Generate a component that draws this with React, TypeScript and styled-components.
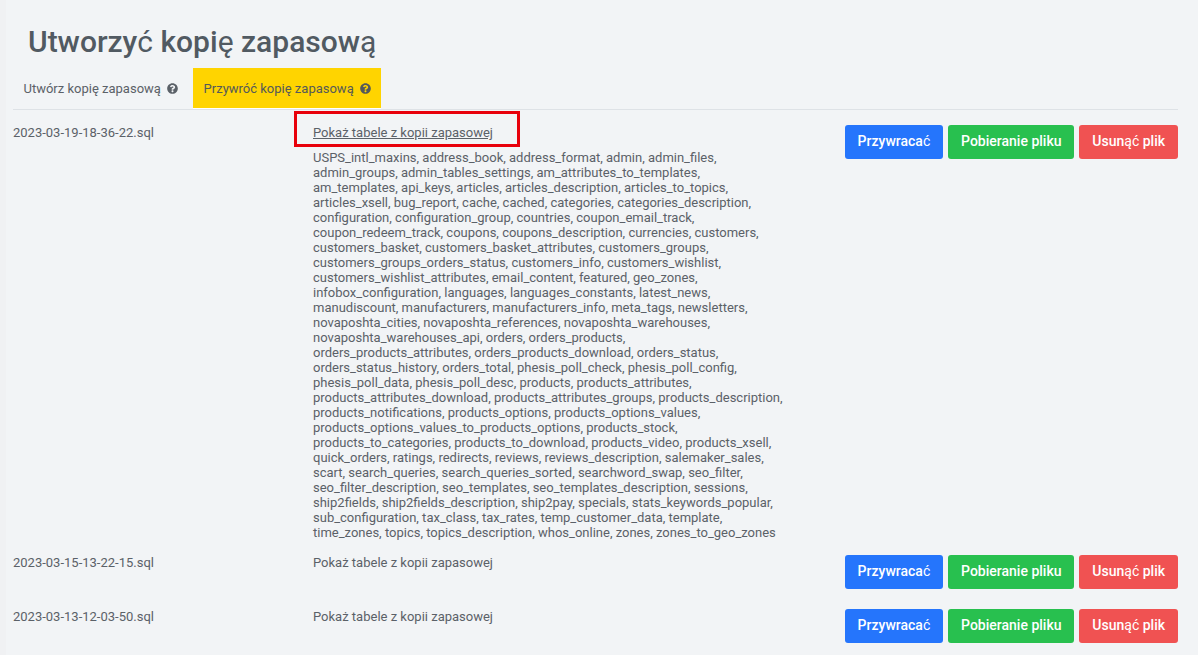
import React from "react";
import styled, { createGlobalStyle } from "styled-components";

const Global = createGlobalStyle`
  html, body { margin: 0; padding: 0; background: #f2f4f6; }
  body { font-family: Roboto, "Liberation Sans", sans-serif; color: #5b6168; font-size: 13px; line-height: 15px; }
  * { box-sizing: border-box; }
`;

const Page = styled.div`
  position: relative;
  width: 1198px;
  height: 655px;
  overflow: hidden;
  border-left: 6px solid #f0f1f3;
  padding: 0 20px 0 7px;
`;

const Title = styled.h1`
  margin: 0;
  padding: 24px 0 0 15px;
  height: 68px;
  font-size: 30px;
  line-height: 35px;
  font-weight: 500;
  color: #515a62;
`;

const LightGlyph = styled.span`
  font-weight: 400;
`;

const Tabs = styled.div`
  display: flex;
  gap: 4.7px;
  height: 42px;
  border-bottom: 1px solid #dee2e6;
`;

const Tab = styled.div<{ $active?: boolean }>`
  display: flex;
  align-items: center;
  gap: 6px;
  height: 41px;
  padding: 0 10.5px;
  background: ${(p) => (p.$active ? "#ffd400" : "transparent")};
  color: ${(p) => (p.$active ? "#54595a" : "#5b6168")};
  border-bottom: ${(p) => (p.$active ? "1px solid #fff" : "none")};
`;

const Help = () => (
  <svg width="11" height="11" viewBox="0 0 512 512" fill="currentColor" aria-hidden="true">
    <path d="M504 256c0 137-111 248-248 248S8 393 8 256C8 119 119 8 256 8s248 111 248 248zM262.700 90c-54.500 0-89.300 23-116.600 63.800-3.500 5.300-2.400 12.400 2.700 16.300l34.700 26.300c5.200 3.900 12.600 3 16.700-2.100 17.900-22.700 30.100-35.800 57.300-35.800 20.400 0 45.700 13.100 45.700 32.900 0 15-12.400 22.700-32.500 34-23.500 13.200-54.600 29.600-54.600 70.500V302c0 6.600 5.400 12 12 12h56c6.600 0 12-5.400 12-12v-1.300c0-28.400 82.900-29.600 82.900-106.400C380 136.400 319.900 90 262.700 90zM256 338c-25.400 0-46 20.600-46 46 0 25.400 20.600 46 46 46s46-20.600 46-46c0-25.400-20.600-46-46-46z" />
  </svg>
);

const Row = styled.div`
  display: grid;
  grid-template-columns: 300px 471px 1fr;
  padding-top: 15px;
`;

const FileName = styled.div``;

const Details = styled.div``;

const ToggleLink = styled.a<{ $open?: boolean }>`
  display: block;
  color: #5b6168;
  text-decoration: ${(p) => (p.$open ? "underline" : "none")};
`;

const TableList = styled.div`
  margin-top: 10px;
`;

const Actions = styled.div`
  display: flex;
  justify-content: flex-end;
  gap: 5px;
  margin-bottom: 5px;
`;

const ActionButton = styled.button<{ $color: string }>`
  height: 34px;
  padding: 0 12.95px 2px;
  border: none;
  border-radius: 3px;
  background: ${(p) => p.$color};
  color: #fff;
  font-family: inherit;
  font-size: 14px;
  font-weight: 500;
  white-space: nowrap;
`;

const Highlight = styled.div`
  position: absolute;
  left: 288px;
  top: 111px;
  width: 226px;
  height: 36px;
  border: 3px solid #e8000b;
  pointer-events: none;
`;

const tables =
  "USPS_intl_maxins, address_book, address_format, admin, admin_files, admin_groups, admin_tables_settings, am_attributes_to_templates, am_templates, api_keys, articles, articles_description, articles_to_topics, articles_xsell, bug_report, cache, cached, categories, categories_description, configuration, configuration_group, countries, coupon_email_track, coupon_redeem_track, coupons, coupons_description, currencies, customers, customers_basket, customers_basket_attributes, customers_groups, customers_groups_orders_status, customers_info, customers_wishlist, customers_wishlist_attributes, email_content, featured, geo_zones, infobox_configuration, languages, languages_constants, latest_news, manudiscount, manufacturers, manufacturers_info, meta_tags, newsletters, novaposhta_cities, novaposhta_references, novaposhta_warehouses, novaposhta_warehouses_api, orders, orders_products, orders_products_attributes, orders_products_download, orders_status, orders_status_history, orders_total, phesis_poll_check, phesis_poll_config, phesis_poll_data, phesis_poll_desc, products, products_attributes, products_attributes_download, products_attributes_groups, products_description, products_notifications, products_options, products_options_values, products_options_values_to_products_options, products_stock, products_to_categories, products_to_download, products_video, products_xsell, quick_orders, ratings, redirects, reviews, reviews_description, salemaker_sales, scart, search_queries, search_queries_sorted, searchword_swap, seo_filter, seo_filter_description, seo_templates, seo_templates_description, sessions, ship2fields, ship2fields_description, ship2pay, specials, stats_keywords_popular, sub_configuration, tax_class, tax_rates, temp_customer_data, template, time_zones, topics, topics_description, whos_online, zones, zones_to_geo_zones";

const backups = [
  { name: "2023-03-19-18-36-22.sql", open: true },
  { name: "2023-03-15-13-22-15.sql", open: false },
  { name: "2023-03-13-12-03-50.sql", open: false },
];

export default function App() {
  return (
    <Page>
      <Global />
      <Title>
        Utworzy<LightGlyph>ć</LightGlyph> kopi<LightGlyph>ę</LightGlyph> zapasow<LightGlyph>ą</LightGlyph>
      </Title>
      <Tabs>
        <Tab>
          Utwórz kopię zapasową <Help />
        </Tab>
        <Tab $active>
          Przywróć kopię zapasową <Help />
        </Tab>
      </Tabs>
      {backups.map((b) => (
        <Row key={b.name}>
          <FileName>{b.name}</FileName>
          <Details>
            <ToggleLink $open={b.open}>Pokaż tabele z kopii zapasowej</ToggleLink>
            {b.open && <TableList>{tables}</TableList>}
          </Details>
          <Actions>
            <ActionButton $color="#2575fc">
              Przywraca<LightGlyph>ć</LightGlyph>
            </ActionButton>
            <ActionButton $color="#28c04f">Pobieranie pliku</ActionButton>
            <ActionButton $color="#f05252">
              Usun<LightGlyph>ąć</LightGlyph> plik
            </ActionButton>
          </Actions>
        </Row>
      ))}
      <Highlight />
    </Page>
  );
}
